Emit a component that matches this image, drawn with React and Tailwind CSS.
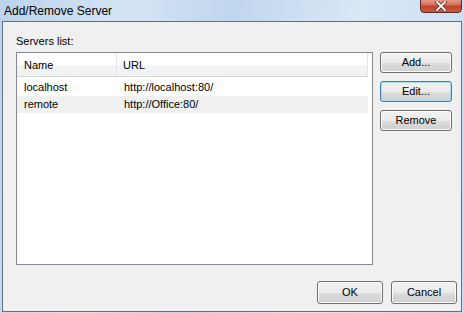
import React from 'react';

const font = { fontFamily: '"Liberation Sans", Arial, sans-serif' };

function WinButton({ children, focused, size = 'h-[21px] w-[72px]' }) {
    return (
        <button
            className={`${size} rounded-[3px] border text-[11px] text-black leading-none ${focused ? 'border-[#3c7fb1] shadow-[inset_0_0_0_1px_#a8dcf7]' : 'border-[#707070] shadow-[inset_0_0_0_1px_#fcfcfc]'} bg-[linear-gradient(to_bottom,#f2f2f2_0%,#ebebeb_50%,#dddddd_51%,#cfcfcf_100%)]`}
        >
            {children}
        </button>
    );
}

const rows = [
    { name: 'localhost', url: 'http://localhost:80/' },
    { name: 'remote', url: 'http://Office:80/' },
];

export default function App() {
    return (
        <div
            style={font}
            className="relative w-[464px] h-[313px] flex flex-col px-[2px] pb-[1px] bg-[linear-gradient(100deg,#bcd3ec_0%,#d4e4f4_25%,#c0d6ee_45%,#d9e7f6_70%,#c6dbf0_100%)]"
        >
            {/* Title bar */}
            <div className="h-[21px] flex items-center pl-[2px] text-[12px] text-black">
                Add/Remove Server
            </div>

            {/* close button */}
            <div className="absolute left-[420px] top-[-2px] w-[42px] h-[15px] rounded-b-[4px] border border-[#5a2a2a] bg-[linear-gradient(to_bottom,#e8a293_0%,#d36e56_45%,#c2412a_55%,#cc5a3e_100%)] flex items-center justify-center">
                <svg width="12" height="10" viewBox="0 0 12 10" className="mt-[1px]">
                    <path d="M2 1 L10 9 M10 1 L2 9" stroke="#5b3434" strokeWidth="3.4" strokeLinecap="square" />
                    <path d="M2 1 L10 9 M10 1 L2 9" stroke="#ffffff" strokeWidth="1.8" strokeLinecap="square" />
                </svg>
            </div>

            {/* Client area */}
            <div className="flex-1 flex flex-col border border-[#5f6f84] bg-[#f0f0f0] text-[11px] text-black">
                <div className="ml-[13px] mt-[13px] h-[13px] leading-[13px]">Servers list:</div>

                <div className="flex mt-[4px] ml-[13px]">
                    {/* list view */}
                    <div className="w-[357px] h-[213px] border border-[#828790] bg-white">
                        <div className="flex h-[24px] w-[351px] border-b border-[#d5d5d5] bg-[linear-gradient(to_bottom,#ffffff_0%,#ffffff_50%,#f3f4f6_51%,#f1f2f4_100%)]">
                            <div className="w-[100px] flex items-center pl-[7px] pt-[2px] border-r border-[#e3e4e6]">Name</div>
                            <div className="flex-1 flex items-center pl-[6px] pt-[2px] border-r border-[#e3e4e6]">URL</div>
                        </div>
                        {rows.map((r, i) => (
                            <div
                                key={r.name}
                                className={`flex h-[17px] items-center w-[351px] ${i === 1 ? 'bg-[#f0f0f0]' : 'mt-[2px]'}`}
                            >
                                <div className="w-[100px] pl-[7px]">{r.name}</div>
                                <div className="pl-[7px]">{r.url}</div>
                            </div>
                        ))}
                    </div>

                    {/* side buttons */}
                    <div className="flex flex-col gap-[8px] ml-[7px]">
                        <WinButton>Add...</WinButton>
                        <WinButton focused>Edit...</WinButton>
                        <WinButton>Remove</WinButton>
                    </div>
                </div>

                <div className="flex justify-end gap-[8px] mt-[16px] mr-[4px]">
                    <WinButton size="h-[23px] w-[66px]">OK</WinButton>
                    <WinButton size="h-[23px] w-[66px]">Cancel</WinButton>
                </div>
            </div>
        </div>
    );
}
